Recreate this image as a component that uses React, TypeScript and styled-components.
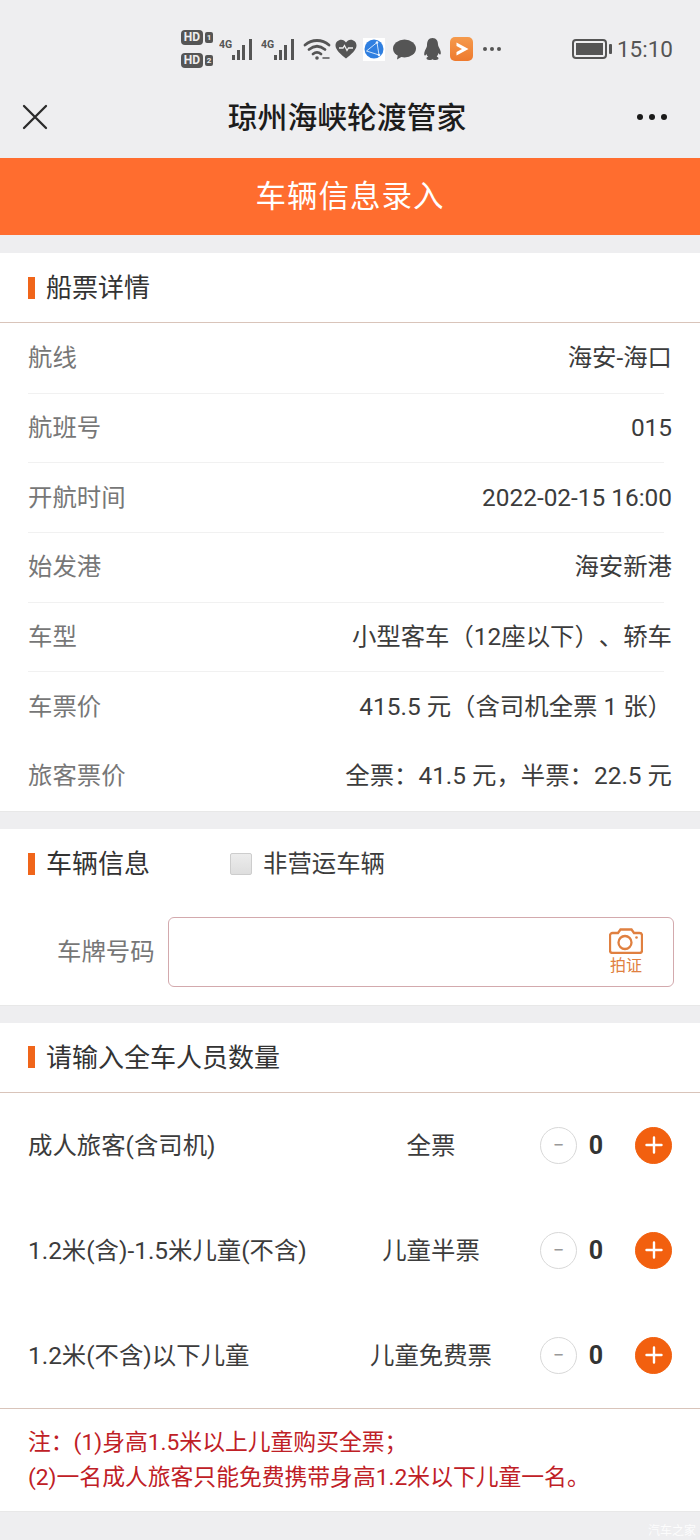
import React from 'react';
import styled, { createGlobalStyle } from 'styled-components';

const GlobalStyle = createGlobalStyle`
  html, body {
    margin: 0;
    padding: 0;
    background: #eeeef0;
    font-family: Roboto, "Noto Sans CJK SC", sans-serif;
    text-spacing-trim: space-all;
  }
`;

const details = [
  ['航线', '海安-海口'],
  ['航班号', '015'],
  ['开航时间', '2022-02-15 16:00'],
  ['始发港', '海安新港'],
  ['车型', '小型客车（12座以下）、轿车'],
  ['车票价', '415.5 元（含司机全票 1 张）'],
  ['旅客票价', '全票：41.5 元，半票：22.5 元'],
];

const passengers = [
  ['成人旅客(含司机)', '全票'],
  ['1.2米(含)-1.5米儿童(不含)', '儿童半票'],
  ['1.2米(不含)以下儿童', '儿童免费票'],
];

const Signal = () => (
  <svg width="36" height="24" viewBox="0 0 36 24">
    <text x="0" y="11" fontSize="10.500" fontWeight="700" fill="#555" fontFamily="Roboto, sans-serif">4G</text>
    <rect x="13" y="18" width="3" height="5" fill="#555" />
    <rect x="18" y="13" width="3" height="10" fill="#555" />
    <rect x="23" y="8" width="3" height="15" fill="#555" />
    <rect x="30" y="2" width="3" height="21" fill="#555" />
  </svg>
);

const App: React.FC = () => {
  return (
    <Page>
      <GlobalStyle />
      <StatusBar>
        <StatusIcons>
          <HdStack>
            <HdRow><HdBadge>HD</HdBadge><SimNo>1</SimNo></HdRow>
            <HdRow><HdBadge>HD</HdBadge><SimNo>2</SimNo></HdRow>
          </HdStack>
          <StatusSlot $gap={6}><Signal /></StatusSlot>
          <StatusSlot $gap={6}><Signal /></StatusSlot>
          <StatusSlot $gap={6}>
            <svg width="28" height="22" viewBox="0 0 28 22" fill="none" stroke="#555" strokeWidth="2.800" strokeLinecap="round">
              <path d="M2 7c7-6 17-6 24 0" />
              <path d="M6 11.500c5-4 11-4 16 0" />
              <path d="M10 16c2.500-2 5.500-2 8 0" />
              <circle cx="14" cy="20" r="1.800" fill="#555" stroke="none" />
              <path d="M20 20h6" strokeWidth="1.500" />
            </svg>
          </StatusSlot>
          <StatusSlot $gap={4}>
            <svg width="22" height="20" viewBox="0 0 22 20">
              <path d="M11 19.500C6 15.500 .5 11 .5 6.500.5 3 3.500.8 6.200.8 8.200.8 10 2 11 3.600 12 2 13.800.8 15.800.8 18.500.8 21.500 3 21.500 6.500 21.500 11 16 15.500 11 19.500Z" fill="#555" />
              <path d="M4 9h4l1.500-2.500 2.500 5 1.500-2.500h4.500" fill="none" stroke="#eee" strokeWidth="1.300" />
            </svg>
          </StatusSlot>
          <StatusSlot $gap={6}>
            <BlueTile>
              <svg width="20" height="20" viewBox="0 0 20 20">
                <circle cx="10" cy="10" r="9.500" fill="#2f7fe0" />
                <path d="M2.500 12 13 3.500l2 12.500z" fill="none" stroke="#cfe3fa" strokeWidth="1" />
                <circle cx="13" cy="3.500" r="1.300" fill="#e8f2fd" />
                <circle cx="15" cy="16" r="1.300" fill="#e8f2fd" />
              </svg>
            </BlueTile>
          </StatusSlot>
          <StatusSlot $gap={8}>
            <svg width="23" height="21" viewBox="0 0 23 21">
              <ellipse cx="11.500" cy="9.500" rx="11.500" ry="9" fill="#555" />
              <path d="M5 15 4 20.500 10 17z" fill="#555" />
            </svg>
          </StatusSlot>
          <StatusSlot $gap={6}>
            <svg width="21" height="24" viewBox="0 0 20 24">
              <path d="M10 1c4 0 5.500 3 5.500 6.500 0 1.500 1 2.500 2 5 1.200 3 1 5 0 5-.6 0-1-.6-1.500-1.500-.3 1.500-1 2.600-1.800 3.400 1 .5 1.800 1 1.800 2 0 1.200-2.500 1.600-4 1.600-1 0-1.600-.3-2-.7-.4.400-1 .7-2 .7-1.500 0-4-.4-4-1.600 0-1 .8-1.500 1.800-2C5 19.600 4.300 18.500 4 17c-.5.900-.9 1.500-1.500 1.500-1 0-1.200-2 0-5 1-2.500 2-3.500 2-5C4.500 4 6 1 10 1Z" fill="#555" />
            </svg>
          </StatusSlot>
          <StatusSlot $gap={7}>
            <OrangeTile>
              <svg width="16" height="16" viewBox="0 0 16 16">
                <path d="M2.500 1.500 14.500 8 2.500 14.500 2.500 11 8 8 2.500 5Z" fill="#fff" />
              </svg>
            </OrangeTile>
          </StatusSlot>
          <StatusSlot $gap={10}>
            <StatusDots><i /><i /><i /></StatusDots>
          </StatusSlot>
        </StatusIcons>
        <StatusRight>
          <Battery><BatteryFill /></Battery>
          <BatteryTip />
          <Clock>15:10</Clock>
        </StatusRight>
      </StatusBar>

      <NavBar>
        <CloseBtn>
          <svg width="26" height="26" viewBox="0 0 26 26" stroke="#2a2a2a" strokeWidth="2.300" strokeLinecap="round">
            <path d="M2 2 24 24M24 2 2 24" />
          </svg>
        </CloseBtn>
        <NavTitle>琼州海峡轮渡管家</NavTitle>
        <MoreDots><i /><i /><i /></MoreDots>
      </NavBar>

      <Banner>车辆信息录入</Banner>

      <Card>
        <SectionHead $divided>
          <Mark />
          <SectionTitle>船票详情</SectionTitle>
        </SectionHead>
        {details.map(([k, v], i) => (
          <DetailRow key={k} $line={i < 5}>
            <DetailKey>{k}</DetailKey>
            <DetailValue $digits={/^[\d\s:-]+$/.test(v)}>{v}</DetailValue>
          </DetailRow>
        ))}
      </Card>

      <Card>
        <SectionHead>
          <Mark />
          <SectionTitle>车辆信息</SectionTitle>
          <CheckBox />
          <CheckLabel>非营运车辆</CheckLabel>
        </SectionHead>
        <PlateRow>
          <PlateLabel>车牌号码</PlateLabel>
          <PlateInput>
            <PhotoBtn>
              <svg width="34" height="26" viewBox="0 0 34 26" fill="none" stroke="#e08040" strokeWidth="2.300">
                <path d="M3.500 5H9l2.500-3.500h11L25 5h5.500A2.500 2.500 0 0 1 33 7.500v15a2.500 2.500 0 0 1-2.500 2.500h-27A2.500 2.500 0 0 1 1 22.500v-15A2.500 2.500 0 0 1 3.500 5Z" />
                <circle cx="16" cy="14.500" r="6.500" />
                <circle cx="27.500" cy="9.500" r="1.300" fill="#e08040" stroke="none" />
              </svg>
              <PhotoText>拍证</PhotoText>
            </PhotoBtn>
          </PlateInput>
        </PlateRow>
      </Card>

      <Card>
        <SectionHead $divided>
          <Mark />
          <SectionTitle>请输入全车人员数量</SectionTitle>
        </SectionHead>
        <PassengerList>
          {passengers.map(([name, kind]) => (
            <PassengerRow key={name}>
              <PassengerName>{name}</PassengerName>
              <PassengerKind>{kind}</PassengerKind>
              <Stepper>
                <StepBtn>−</StepBtn>
                <Count>0</Count>
                <StepBtn $primary>
                  <svg width="18" height="18" viewBox="0 0 18 18" stroke="#fff" strokeWidth="2.400" strokeLinecap="round">
                    <path d="M9 1.500v15M1.500 9h15" />
                  </svg>
                </StepBtn>
              </Stepper>
            </PassengerRow>
          ))}
        </PassengerList>
        <Note>
          注：(1)身高1.5米以上儿童购买全票；
          <br />
          (2)一名成人旅客只能免费携带身高1.2米以下儿童一名。
        </Note>
      </Card>

      <Watermark>汽车之家</Watermark>
    </Page>
  );
};

export default App;

const Page = styled.div`
  position: relative;
  width: 700px;
  height: 1540px;
  overflow: hidden;
  background: #eeeef0;
`;

const StatusBar = styled.div`
  height: 84px;
  padding: 14px 27px 0 181px;
  box-sizing: border-box;
  display: flex;
  align-items: center;
  justify-content: space-between;
`;

const StatusIcons = styled.div`
  display: flex;
  align-items: center;
`;

const StatusSlot = styled.div<{ $gap: number }>`
  display: flex;
  align-items: center;
  margin-left: ${p => p.$gap}px;
`;

const HdStack = styled.div`
  display: flex;
  flex-direction: column;
  gap: 8px;
  width: 32px;
`;

const HdRow = styled.div`
  display: flex;
  align-items: center;
  gap: 2px;
`;

const HdBadge = styled.span`
  background: #555;
  color: #eee;
  font-size: 12px;
  font-weight: 700;
  line-height: 15px;
  width: 22px;
  text-align: center;
  border-radius: 4px;
`;

const SimNo = styled.span`
  background: #555;
  color: #eee;
  font-size: 8px;
  font-weight: 700;
  line-height: 11px;
  width: 8px;
  text-align: center;
  border-radius: 2px;
`;

const BlueTile = styled.div`
  width: 22px;
  height: 23px;
  background: #fff;
  display: flex;
  align-items: center;
  justify-content: center;
`;

const OrangeTile = styled.div`
  width: 23px;
  height: 24px;
  border-radius: 5px;
  background: linear-gradient(#f59a4c, #ee7a2e);
  display: flex;
  align-items: center;
  justify-content: center;
`;

const StatusDots = styled.span`
  display: flex;
  gap: 3px;

  i {
    width: 4px;
    height: 4px;
    border-radius: 50%;
    background: #555;
  }
`;

const StatusRight = styled.div`
  display: flex;
  align-items: center;
`;

const Battery = styled.div`
  width: 35px;
  height: 20px;
  box-sizing: border-box;
  border: 2px solid #555;
  border-radius: 4px;
  padding: 2px;
  display: flex;
`;

const BatteryFill = styled.div`
  flex: 1;
  background: #555;
`;

const BatteryTip = styled.div`
  width: 3px;
  height: 10px;
  margin-left: 2px;
  background: #555;
  border-radius: 1px;
`;

const Clock = styled.span`
  margin-left: 5px;
  font-size: 22.500px;
  color: #555;
`;

const NavBar = styled.div`
  height: 74px;
  padding: 0 33px 8px 22px;
  box-sizing: border-box;
  display: flex;
  align-items: center;
  justify-content: space-between;
  background: #eeeef0;
`;

const CloseBtn = styled.div`
  width: 35px;
  display: flex;
`;

const NavTitle = styled.div`
  font-size: 29.800px;
  font-weight: 500;
  color: #1c1c1c;
  padding-bottom: 4px;
`;

const MoreDots = styled.div`
  display: flex;
  gap: 6px;

  i {
    width: 6px;
    height: 6px;
    border-radius: 50%;
    background: #1a1a1a;
  }
`;

const Banner = styled.div`
  height: 77px;
  box-sizing: border-box;
  padding-bottom: 6px;
  background: #ff6d2f;
  color: #fff;
  font-size: 30.500px;
  letter-spacing: 1px;
  display: flex;
  align-items: center;
  justify-content: center;
`;

const Card = styled.section`
  margin-top: 18px;
  background: #fff;
  box-shadow: 0 1px 0 #e8e8e8;
`;

const SectionHead = styled.div<{ $divided?: boolean }>`
  height: 70px;
  box-sizing: border-box;
  padding-left: 28px;
  display: flex;
  align-items: center;
  border-bottom: ${p => (p.$divided ? '1px solid #d9c4ba' : 'none')};
`;

const Mark = styled.span`
  width: 7px;
  height: 22px;
  background: #f0651a;
  margin-right: 11px;
`;

const SectionTitle = styled.h2`
  margin: 0;
  padding-bottom: 4px;
  font-size: 26px;
  font-weight: 400;
  color: #333;
`;

const DetailRow = styled.div<{ $line: boolean }>`
  height: 69.700px;
  box-sizing: border-box;
  margin-left: 28px;
  padding-right: 28px;
  display: flex;
  align-items: center;
  justify-content: space-between;
  position: relative;

  &::after {
    content: '';
    display: ${p => (p.$line ? 'block' : 'none')};
    position: absolute;
    left: 0;
    right: 36px;
    bottom: -1px;
    height: 1px;
    background: #f1f1f1;
  }
`;

const DetailKey = styled.span`
  padding-bottom: 4px;
  font-size: 24.400px;
  color: #777;
`;

const DetailValue = styled.span<{ $digits: boolean }>`
  padding-bottom: ${p => (p.$digits ? 0 : 4)}px;
  font-size: 24.400px;
  color: #3c3c3c;
`;

const CheckBox = styled.span`
  width: 22px;
  height: 22px;
  box-sizing: border-box;
  margin-left: 80px;
  border: 1px solid #cdcdcd;
  border-radius: 2px;
  background: linear-gradient(#ececec, #dedede);
`;

const CheckLabel = styled.span`
  margin-left: 11px;
  padding-bottom: 4px;
  font-size: 24.400px;
  color: #3c3c3c;
`;

const PlateRow = styled.div`
  padding: 18px 26px 18px 57px;
  display: flex;
  align-items: center;
`;

const PlateLabel = styled.span`
  width: 111px;
  padding-bottom: 4px;
  font-size: 24.400px;
  color: #777;
`;

const PlateInput = styled.div`
  flex: 1;
  height: 70px;
  box-sizing: border-box;
  border: 1px solid #d3a9ad;
  border-radius: 6px;
  padding-right: 30px;
  display: flex;
  align-items: center;
  justify-content: flex-end;
`;

const PhotoBtn = styled.div`
  display: flex;
  flex-direction: column;
  align-items: center;
  gap: 2px;
`;

const PhotoText = styled.span`
  font-size: 16px;
  line-height: 20px;
  color: #e08040;
`;

const PassengerList = styled.div`
  border-bottom: 1px solid #d9c4ba;
`;

const PassengerRow = styled.div`
  height: 105px;
  padding: 0 28px;
  display: grid;
  grid-template-columns: 316px 174px 1fr;
  align-items: center;
`;

const PassengerName = styled.span`
  padding-bottom: 4px;
  font-size: 24.400px;
  color: #3c3c3c;
`;

const PassengerKind = styled.span`
  padding-bottom: 4px;
  font-size: 24.400px;
  color: #3c3c3c;
  text-align: center;
`;

const Stepper = styled.div`
  display: flex;
  align-items: center;
  justify-content: flex-end;
`;

const StepBtn = styled.span<{ $primary?: boolean }>`
  width: 37px;
  height: 37px;
  box-sizing: border-box;
  border-radius: 50%;
  border: 1px solid ${p => (p.$primary ? '#f2600f' : '#d8d8d8')};
  background: ${p => (p.$primary ? '#f2600f' : '#fff')};
  color: #999;
  font-size: 20px;
  display: flex;
  align-items: center;
  justify-content: center;
`;

const Count = styled.span`
  width: 58px;
  box-sizing: border-box;
  padding-right: 20px;
  text-align: center;
  font-size: 25px;
  font-weight: 700;
  color: #333;
`;

const Note = styled.div`
  padding: 16px 28px;
  font-size: 22.800px;
  line-height: 35px;
  color: #bf2026;
`;

const Watermark = styled.span`
  position: absolute;
  right: 4px;
  bottom: 2px;
  font-size: 12px;
  color: rgba(255, 255, 255, 0.85);
`;
